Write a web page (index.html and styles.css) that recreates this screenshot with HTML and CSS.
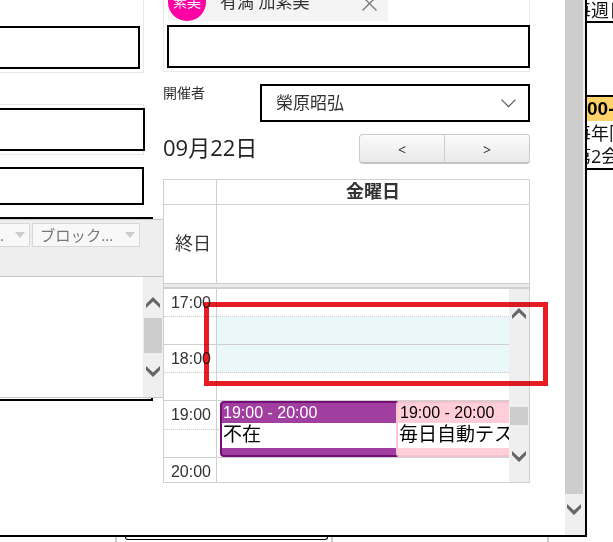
FILE: index.html
```html
<!DOCTYPE html>
<html lang="ja">
<head>
<meta charset="utf-8">
<title>予定</title>
<link rel="stylesheet" href="styles.css">
</head>
<body>
<div class="top">
  <div class="dialog">
    <div class="left">
      <div class="group group-a"><div class="box"></div></div>
      <div class="group group-b"><div class="box"></div></div>
      <div class="box box-c"></div>
      <div class="editor-line"></div>
      <div class="editor">
        <div class="toolbar">
          <div class="select select-a"><span>...</span><i></i></div>
          <div class="select select-b"><span>ブロック...</span><i></i></div>
        </div>
        <div class="editor-body">
          <div class="scroll editor-scroll">
            <svg width="14" height="12" viewBox="0 0 14 12"><path d="M0 7 7 0l7 7v4L7 4.500 0 11z"/></svg>
            <div class="thumb"></div>
            <svg width="14" height="12" viewBox="0 0 14 12"><path d="M0 0 7 6.500l7-6.500v4L7 11 0 4z"/></svg>
          </div>
        </div>
      </div>
      <div class="editor-end"></div>
    </div>
    <div class="main">
      <div class="people">
        <div class="chip">
          <div class="avatar">素美</div>
          <div class="name">有満 加素美</div>
          <svg width="15" height="15" viewBox="0 0 15 15"><path d="M.5.5l14 14M14.500.5l-14 14"/></svg>
        </div>
        <div class="people-input"></div>
      </div>
      <div class="owner">
        <div class="label">開催者</div>
        <div class="combo"><span>榮原昭弘</span><svg width="15" height="9" viewBox="0 0 15 9"><path d="M.5.7l7 7 7-7"/></svg></div>
      </div>
      <div class="datebar">
        <div class="date">09月22日</div>
        <div class="nav"><div>&lt;</div><div>&gt;</div></div>
      </div>
      <div class="calendar">
        <div class="head"><div class="axis"></div><div class="day">金曜日</div></div>
        <div class="allday"><div class="axis">終日</div></div>
        <div class="split"></div>
        <div class="grid">
          <div class="hours">
            <div class="cell first">17:00</div><div class="cell half"></div>
            <div class="cell">18:00</div><div class="cell half"></div>
            <div class="cell tall">19:00</div><div class="cell half"></div>
            <div class="cell last">20:00</div>
          </div>
          <div class="slots">
            <div class="cell first"></div><div class="cell half free"></div>
            <div class="cell free"></div><div class="cell half"></div>
            <div class="cell tall"></div><div class="cell half"></div>
            <div class="cell last"></div>
            <div class="event away"><div class="time">19:00 - 20:00</div><div class="title">不在</div></div>
            <div class="event test"><div class="time">19:00 - 20:00</div><div class="title">毎日自動テスト</div></div>
          </div>
          <div class="scroll grid-scroll">
            <svg width="14" height="12" viewBox="0 0 14 12"><path d="M0 7 7 0l7 7v4L7 4.500 0 11z"/></svg>
            <div class="thumb"></div>
            <svg width="14" height="12" viewBox="0 0 14 12"><path d="M0 0 7 6.500l7-6.500v4L7 11 0 4z"/></svg>
          </div>
        </div>
      </div>
    </div>
    <div class="scroll page-scroll">
      <div class="thumb"></div>
      <svg width="14" height="12" viewBox="0 0 14 12"><path d="M0 0 7 6.500l7-6.500v4L7 11 0 4z"/></svg>
    </div>
  </div>
  <div class="behind">
    <div class="entry entry-a"><span>毎週日</span></div>
    <div class="blank"></div>
    <div class="entry-time"><span>00-</span></div>
    <div class="entry entry-b"><span>毎年同</span><span>第2会</span></div>
  </div>
</div>
<div class="bottom"><div class="tick"></div><div class="card"></div><div class="tick"></div><div class="tick"></div></div>
<div class="marker"></div>
</body>
</html>
```

FILE: styles.css
```css
* { box-sizing: border-box; }
body {
  margin: 0;
  width: 613px;
  height: 542px;
  overflow: hidden;
  background: #fff;
  color: #333;
  font-family: "Open Sans", "Noto Sans CJK JP", sans-serif;
  font-weight: 400;
  position: relative;
}
svg { display: block; flex: none; }
.top { display: flex; height: 537px; }
.dialog {
  display: flex;
  flex: none;
  width: 587px;
  border-right: 2px solid #000;
  border-bottom: 2px solid #000;
}

/* left column */
.left { width: 163px; flex: none; }
.box { border: 2px solid #000; border-left: 0; height: 43px; }
.group { width: 144px; border: 1px solid #e8e8e8; border-left: 0; }
.group-a { height: 73px; border-top: 0; padding-top: 26px; }
.group-a .box { width: 140px; }
.group-b { height: 51px; margin-top: 31px; padding-top: 3px; }
.group-b .box { width: 145px; }
.box-c { width: 144px; height: 38px; margin-top: 12px; }
.editor-line { width: 153px; height: 2px; margin-top: 12px; background: #000; }
.editor { height: 179px; border-top: 1px solid #c8c8c8; border-bottom: 1px solid #c8c8c8; }
.toolbar {
  height: 57px;
  display: flex;
  gap: 2px;
  padding-top: 3px;
  background: #eee;
  border-bottom: 1px solid #c8c8c8;
}
.select {
  height: 24px;
  border: 1px solid #d8d8d8;
  background: #f8f8f8;
  display: flex;
  align-items: center;
  justify-content: space-between;
  color: #777;
  font-size: 15.3px;
  line-height: 22px;
  padding: 0 4px 0 7px;
}
.select i { border: 5px solid transparent; border-top: 6px solid #ccc; border-bottom: 0; }
.select-a { width: 30px; border-left: 0; padding-left: 0; }
.select-a span { width: 4px; display: flex; justify-content: flex-end; }
.select-b { width: 108px; }
.editor-body { height: 120px; display: flex; justify-content: flex-end; }
.scroll {
  width: 20px;
  flex: none;
  background: #efefef;
  display: flex;
  flex-direction: column;
  align-items: center;
}
.scroll path { fill: #666; }
.thumb { width: 18px; background: #cdcdcd; }
.editor-scroll { padding-top: 20px; }
.editor-scroll .thumb { height: 35px; margin: 9px 0 13px; }
.editor-end { width: 153px; height: 3px; border-right: 2px solid #000; border-bottom: 2px solid #000; }

/* right column */
.main { width: 367px; flex: none; }
.people { height: 72px; border: 1px solid #e8e8e8; border-top: 0; padding-left: 3px; }
.chip { width: 220px; height: 21px; margin-left: 1px; background: #f4f4f4; display: flex; overflow: hidden; }
.avatar {
  width: 38px;
  height: 38px;
  margin-top: -17px;
  flex: none;
  border-radius: 50%;
  background: #ff00a2;
  color: #fff;
  font-size: 14px;
  line-height: 37px;
  text-align: center;
}
.name { width: 141px; padding-left: 14px; margin-top: -10px; font-size: 17px; line-height: 24px; white-space: nowrap; }
.chip svg { margin: -4px 0 0 15px; }
.chip path { fill: none; stroke: #777; stroke-width: 1.3; }
.people-input { width: 363px; height: 43px; margin-top: 4px; border: 2px solid #000; }
.owner { display: flex; justify-content: space-between; margin-top: 12px; }
.label { font-size: 14px; line-height: 18px; }
.combo {
  width: 270px;
  height: 38px;
  border: 2px solid #000;
  display: flex;
  align-items: center;
  justify-content: space-between;
  padding: 0 12px 0 14px;
  font-size: 17px;
  line-height: 34px;
}
.combo path { fill: none; stroke: #555; stroke-width: 1.2; }
.datebar { display: flex; justify-content: space-between; height: 30px; margin-top: 12px; }
.date { font-size: 22px; line-height: 26px; color: #222; }
.nav {
  display: flex;
  width: 171px;
  border: 1px solid #ccc;
  border-bottom: 2px solid #c4c4c4;
  border-radius: 4px;
  background: linear-gradient(#fbfbfb, #e9e9e9);
  font-size: 14px;
  line-height: 29px;
  text-align: center;
}
.nav div { width: 84px; }
.nav div + div { width: 85px; border-left: 1px solid #ccc; }

/* calendar */
.calendar { margin-top: 15px; height: 304px; border: 1px solid #d0d0d0; }
.head { display: flex; height: 25px; border-bottom: 1px solid #d0d0d0; }
.axis { width: 53px; flex: none; border-right: 1px solid #d0d0d0; text-align: right; }
.day { flex: 1; text-align: center; font-size: 18px; font-weight: 700; line-height: 23px; }
.allday { display: flex; height: 78px; font-size: 18px; line-height: 76px; }
.allday .axis { padding-right: 5px; }
.split { height: 6px; background: #ebebeb; border-top: 1px solid #ccc; border-bottom: 2px solid #d0d0d0; }
.grid { display: flex; height: 193px; }
.hours { width: 53px; flex: none; border-right: 1px solid #d0d0d0; }
.cell {
  height: 28px;
  border-bottom: 1px dotted #ccc;
  padding-right: 5px;
  text-align: right;
  font: 16px/27px "Liberation Sans", sans-serif;
}
.first { line-height: 28px; }
.half { border-bottom: 1px solid #d0d0d0; }
.tall { height: 29px; }
.last { height: 25px; border-bottom: 0; }
.slots { width: 292px; flex: none; position: relative; overflow: hidden; }
.free { background: #eaf8fa; }
.event {
  position: absolute;
  top: 112px;
  height: 56px;
  border: 2px solid;
  border-radius: 4px;
  overflow: hidden;
  color: #000;
  white-space: nowrap;
}
.time { font: 16px/19px "Liberation Sans", sans-serif; height: 20px; padding-left: 1px; }
.title { background: #fff; height: 25px; padding-left: 1px; font-size: 19px; line-height: 23px; }
.away { left: 3px; width: 180px; border-color: #760d76; background: #a13fa1; }
.away .time { color: #fff; }
.test { left: 179px; width: 140px; border-color: #f3c3cd; border-left-color: #ffc4d0; background: #ffced8; }
.test .time { padding-left: 2px; }
.grid-scroll { padding-top: 19px; }
.grid-scroll .thumb { height: 18px; margin: 87px 0 26px; }
.page-scroll { margin-left: 35px; padding-right: 2px; }
.page-scroll .thumb { height: 494px; margin-bottom: 10px; }

/* schedule behind the dialog */
.behind { flex: 1; overflow: hidden; color: #111; font-size: 18px; }
.behind span { display: block; white-space: nowrap; margin-left: -14px; }
.entry { border-bottom: 2px solid #000; }
.entry-a { height: 23px; line-height: 21px; }
.blank { height: 72px; }
.entry-time { height: 26px; border-top: 2px solid #000; background: #ffd36a; color: #000; font: 700 19px/23px "Liberation Sans", sans-serif; }
.behind .entry-time span { margin-left: 0; }
.entry-b { height: 49px; padding-top: 1px; line-height: 23px; }
.bottom { display: flex; height: 5px; padding-left: 115px; }
.tick { width: 2px; background: #ccc; }
.card { width: 203px; height: 3px; margin: 0 3px 0 8px; border: 1px solid #000; border-top: 0; border-radius: 0 0 3px 3px; }
.tick + .tick { margin-left: 214px; }
.marker {
  position: absolute;
  left: 204px;
  top: 302px;
  width: 344px;
  height: 84px;
  border: 5px solid #e81c25;
  mix-blend-mode: multiply;
}
```
